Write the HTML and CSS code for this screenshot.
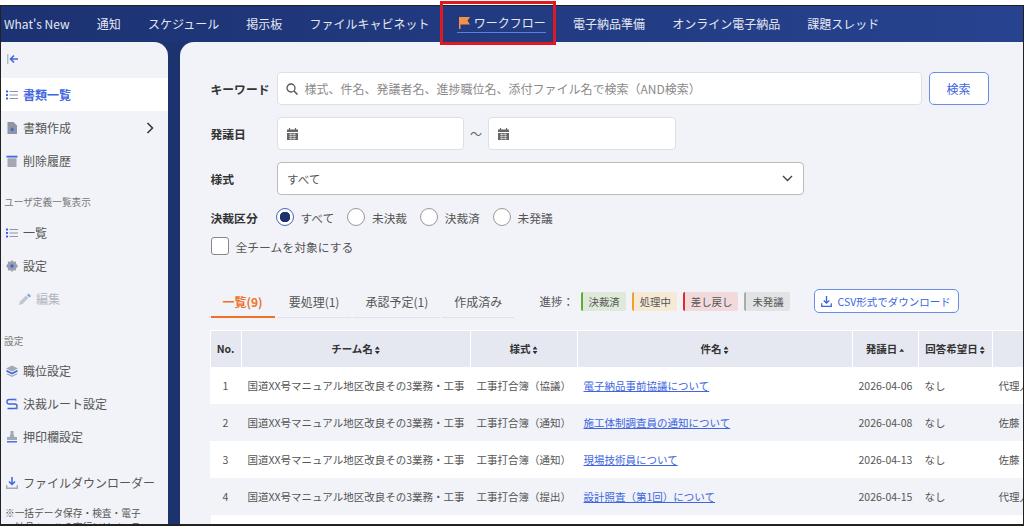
FILE: index.html
```html
<!DOCTYPE html>
<html lang="ja">
<head>
    <meta charset="utf-8">
    <title>ワークフロー</title>
    <link rel="stylesheet" href="styles.css">
</head>
<body>
    <div class="frame">
        <nav class="topnav">
            <a>What's New</a>
            <a>通知</a>
            <a>スケジュール</a>
            <a>掲示板</a>
            <a>ファイルキャビネット</a>
            <a class="current">
                <svg width="11" height="12" viewBox="0 0 11 12"><path d="M0 0h11L8.500 3.700 11 7.500H1.500V12H0z" fill="#f0924a"/></svg>
                ワークフロー
            </a>
            <a>電子納品準備</a>
            <a>オンライン電子納品</a>
            <a>課題スレッド</a>
        </nav>

        <div class="workspace">
            <aside class="sidebar">
                <div class="collapse">
                    <svg width="12" height="10" viewBox="0 0 12 10"><path d="M.8 0v10" stroke="#9aa0ad" fill="none"/><path d="M11 5H4M7 1.500 3.500 5 7 8.500" stroke="#3d66e0" stroke-width="1.600" fill="none"/></svg>
                </div>
                <a class="side-item active">
                    <svg class="side-icon" viewBox="0 0 12 12"><path d="M0 1.500h2v2H0zM0 5h2v2H0zM0 8.500h2v2H0z" fill="#3d66e0"/><path d="M3.500 2.500H12M3.500 6H12M3.500 9.500H12" stroke="#8f95a3" fill="none"/></svg>
                    書類一覧
                </a>
                <a class="side-item">
                    <svg class="side-icon" viewBox="0 0 12 12"><path d="M1.500 0h6L11 3.500V12H1.500z" fill="#8f95a3"/><path d="M4.500 7.500h3.500M6.200 5.800v3.500" stroke="#3d66e0" stroke-width="1.500"/></svg>
                    書類作成
                    <svg class="side-chevron" width="8" height="12" viewBox="0 0 8 12"><path d="M1.500 1 6.500 6l-5 5" stroke="#333" stroke-width="1.500" fill="none"/></svg>
                </a>
                <a class="side-item">
                    <svg class="side-icon" viewBox="0 0 12 12"><path d="M1.500 3.200h9V12h-9z" fill="#a3a8b3"/><path d="M.5.800h11v1.600H.5z" fill="#3d66e0"/></svg>
                    削除履歴
                </a>

                <div class="side-label user">ユーザ定義一覧表示</div>
                <a class="side-item">
                    <svg class="side-icon" viewBox="0 0 12 12"><path d="M0 1.500h2v2H0zM0 5h2v2H0zM0 8.500h2v2H0z" fill="#3d66e0"/><path d="M3.500 2.500H12M3.500 6H12M3.500 9.500H12" stroke="#8f95a3" fill="none"/></svg>
                    一覧
                </a>
                <a class="side-item">
                    <svg class="side-icon" viewBox="0 0 12 12"><path d="M6 0l1.500 1.700 2.300-.3.400 2.300L12 6l-1.800 2.300-.4 2.300-2.300-.3L6 12l-1.500-1.700-2.300.3-.4-2.300L0 6l1.800-2.300.4-2.300 2.300.3z" fill="#9a9fab"/><circle cx="6" cy="6" r="1.700" fill="#3d66e0"/></svg>
                    設定
                </a>
                <a class="side-item sub">
                    <svg class="side-icon" viewBox="0 0 12 12"><path d="M0 12l1-3.500 6-6L9.500 5l-6 6z" fill="#c3c6cf"/><path d="M8 2l1.500-1.500L12 3l-1.500 1.500z" fill="#7f9bea"/></svg>
                    編集
                </a>

                <div class="side-label settings">設定</div>
                <a class="side-item">
                    <svg class="side-icon" viewBox="0 0 12 12"><path d="M6 .5l6 3-6 3-6-3z" fill="#a3a8b3"/><path d="M.5 5.800 6 8.500l5.500-2.700" stroke="#3d66e0" stroke-width="1.600" fill="none"/><path d="M1 8.800 6 11.300l5-2.500" stroke="#a3a8b3" stroke-width="1.200" fill="none"/></svg>
                    職位設定
                </a>
                <a class="side-item">
                    <svg class="side-icon" viewBox="0 0 12 12"><path d="M10 1.500H3.200a2 2 0 0 0 0 4.500h5.600a2 2 0 0 1 0 4.500H1.500" stroke="#3d66e0" stroke-width="1.400" fill="none"/><path d="M10 .5v2.500M10.500 9.500l1.500 1-1.500 1" stroke="#8f95a3" fill="none"/></svg>
                    決裁ルート設定
                </a>
                <a class="side-item">
                    <svg class="side-icon" viewBox="0 0 12 12"><path d="M4.500 0h3v3.500L8.500 6H11v3H1V6h2.500l1-2.500z" fill="#a3a8b3"/><path d="M1 10.800h10" stroke="#3d66e0" stroke-width="1.400"/></svg>
                    押印欄設定
                </a>
                <a class="side-item download">
                    <svg class="side-icon" viewBox="0 0 12 12"><path d="M6 0v7M3 4.500 6 7.500l3-3" stroke="#3d66e0" stroke-width="1.500" fill="none"/><path d="M.7 8v3.300h10.600V8" stroke="#a3a8b3" stroke-width="1.400" fill="none"/></svg>
                    ファイルダウンローダー
                </a>
                <p class="side-note">※一括データ保存・検査・電子納品ツールの実行にはインストールが必要です</p>
            </aside>

            <main class="content">
                <div class="form-row">
                    <label class="form-label">キーワード</label>
                    <div class="field keyword">
                        <svg width="12" height="12" viewBox="0 0 12 12"><circle cx="5" cy="5" r="4" stroke="#555" stroke-width="1.300" fill="none"/><path d="M8 8l3.500 3.500" stroke="#555" stroke-width="1.500"/></svg>
                        <span class="placeholder">様式、件名、発議者名、進捗職位名、添付ファイル名で検索（AND検索）</span>
                    </div>
                    <button class="btn search-btn">検索</button>
                </div>
                <div class="form-row">
                    <label class="form-label">発議日</label>
                    <div class="field date">
                        <svg width="11" height="12" viewBox="0 0 11 12"><path d="M2.500 0v2M8.500 0v2" stroke="#666" stroke-width="1.200"/><path d="M0 1.500h11V4H0zM0 5h11v7H0z" fill="#666"/><path d="M2 6.500h7M2 8.500h7M2 10.500h7M3.800 5v7M7.200 5v7" stroke="#fff" stroke-width=".5"/></svg>
                    </div>
                    <span class="tilde">～</span>
                    <div class="field date">
                        <svg width="11" height="12" viewBox="0 0 11 12"><path d="M2.500 0v2M8.500 0v2" stroke="#666" stroke-width="1.200"/><path d="M0 1.500h11V4H0zM0 5h11v7H0z" fill="#666"/><path d="M2 6.500h7M2 8.500h7M2 10.500h7M3.800 5v7M7.200 5v7" stroke="#fff" stroke-width=".5"/></svg>
                    </div>
                </div>
                <div class="form-row">
                    <label class="form-label">様式</label>
                    <div class="field select">
                        すべて
                        <svg width="11" height="7" viewBox="0 0 11 7"><path d="M1 1l4.500 4.500L10 1" stroke="#444" stroke-width="1.400" fill="none"/></svg>
                    </div>
                </div>
                <div class="radio-row">
                    <label class="form-label">決裁区分</label>
                    <span class="radio on"></span><span class="radio-text">すべて</span>
                    <span class="radio"></span><span class="radio-text">未決裁</span>
                    <span class="radio"></span><span class="radio-text">決裁済</span>
                    <span class="radio"></span><span class="radio-text">未発議</span>
                </div>
                <div class="check-row">
                    <span class="checkbox"></span>全チームを対象にする
                </div>

                <div class="tab-row">
                    <div class="tabs">
                        <a class="tab active">一覧(9)</a>
                        <a class="tab">要処理(1)</a>
                        <a class="tab">承認予定(1)</a>
                        <a class="tab">作成済み</a>
                    </div>
                    <span class="legend-title">進捗：</span>
                    <span class="badge done">決裁済</span>
                    <span class="badge doing">処理中</span>
                    <span class="badge back">差し戻し</span>
                    <span class="badge none">未発議</span>
                    <button class="btn csv-btn">
                        <svg width="11" height="11" viewBox="0 0 12 12"><path d="M6 0v7.500M3 4.800 6 7.800l3-3" stroke="#3d66e0" stroke-width="1.500" fill="none"/><path d="M.8 8v3.200h10.400V8" stroke="#3d66e0" stroke-width="1.400" fill="none"/></svg>
                        CSV形式でダウンロード
                    </button>
                </div>

                <table class="doc-table">
                    <colgroup>
                        <col class="c-no"><col class="c-team"><col class="c-form"><col class="c-title"><col class="c-date"><col class="c-reply"><col class="c-rest">
                    </colgroup>
                    <thead>
                        <tr>
                            <th>No.</th>
                            <th>チーム名<i class="sort"></i></th>
                            <th>様式<i class="sort"></i></th>
                            <th>件名<i class="sort"></i></th>
                            <th>発議日<i class="sort-up"></i></th>
                            <th>回答希望日<i class="sort"></i></th>
                            <th></th>
                        </tr>
                    </thead>
                    <tbody>
                        <tr>
                            <td class="num">1</td>
                            <td>国道XX号マニュアル地区改良その3業務・工事</td>
                            <td>工事打合簿（協議）</td>
                            <td><a class="doc-link">電子納品事前協議について</a></td>
                            <td>2026-04-06</td>
                            <td>なし</td>
                            <td>代理人</td>
                        </tr>
                        <tr>
                            <td class="num">2</td>
                            <td>国道XX号マニュアル地区改良その3業務・工事</td>
                            <td>工事打合簿（通知）</td>
                            <td><a class="doc-link">施工体制調査員の通知について</a></td>
                            <td>2026-04-08</td>
                            <td>なし</td>
                            <td>佐藤</td>
                        </tr>
                        <tr>
                            <td class="num">3</td>
                            <td>国道XX号マニュアル地区改良その3業務・工事</td>
                            <td>工事打合簿（通知）</td>
                            <td><a class="doc-link">現場技術員について</a></td>
                            <td>2026-04-13</td>
                            <td>なし</td>
                            <td>佐藤</td>
                        </tr>
                        <tr>
                            <td class="num">4</td>
                            <td>国道XX号マニュアル地区改良その3業務・工事</td>
                            <td>工事打合簿（提出）</td>
                            <td><a class="doc-link">設計照査（第1回）について</a></td>
                            <td>2026-04-15</td>
                            <td>なし</td>
                            <td>代理人</td>
                        </tr>
                    </tbody>
                </table>
            </main>
        </div>
        <div class="callout"></div>
    </div>
</body>
</html>
```

FILE: styles.css
```css
* {
    box-sizing: border-box;
}
html, body {
    height: 100%;
    overflow: hidden;
}
body {
    margin: 0;
    background: white;
    font-family: "Noto Sans CJK JP", "Noto Sans", sans-serif;
    color: #555;
}
.frame {
    position: relative;
    margin-top: 5px;
    height: 521px;
    border: 1px solid #222;
    border-width: 1.500px 1.500px 2px 1.500px;
    background: #1d3370;
    display: flex;
    flex-direction: column;
}
.callout {
    position: absolute;
    left: 438.500px;
    top: -5.500px;
    width: 116px;
    height: 44px;
    border: 3px solid #dd1a22;
}

/* top navigation */
.topnav {
    flex: none;
    height: 36px;
    display: flex;
    align-items: center;
    gap: 27.200px;
    padding: 0 0 1px 3px;
    background: linear-gradient(90deg, #1c3272, #27438f);
    color: #e4e8f2;
    font-size: 12px;
    line-height: 17px;
}
.topnav a {
    white-space: nowrap;
}
.topnav .current {
    display: flex;
    align-items: center;
    gap: 3.500px;
    height: 19px;
    padding: 0 0 1px 2.500px;
    border-bottom: 1.500px solid #5b80e0;
}
.workspace {
    flex: 1;
    display: flex;
    gap: 11.500px;
    min-height: 0;
}

/* sidebar */
.sidebar {
    flex: none;
    width: 167px;
    background: #f1f3f8;
    border-top-right-radius: 14px;
    overflow: hidden;
    font-size: 12px;
}
.collapse {
    height: 36px;
    padding: 12px 0 0 6px;
    display: flex;
}
.side-item {
    position: relative;
    display: flex;
    align-items: center;
    gap: 5px;
    height: 33px;
    padding-left: 5px;
    color: #555;
    white-space: nowrap;
}
.side-item.active {
    background: white;
    color: #3d66e0;
    font-weight: 700;
}
.side-item.sub {
    padding-left: 18px;
    color: #b3b6bf;
}
.side-item.download {
    margin-top: 13px;
}
.side-icon {
    width: 12px;
    height: 12px;
    flex: none;
}
.side-chevron {
    position: absolute;
    left: 145px;
    top: 11px;
}
.side-label {
    margin-top: 13px;
    height: 24px;
    padding-left: 3px;
    font-size: 9.700px;
    line-height: 24px;
    color: #777;
}
.side-label.user {
    margin-bottom: 2px;
}
.side-label.settings {
    margin-top: 14px;
}
.side-label + .side-item {
    margin-top: 1px;
}
.side-note {
    margin: 8px 20px 0 4px;
    padding-left: 10px;
    text-indent: -10px;
    font-size: 9.700px;
    line-height: 13.500px;
    color: #555;
}

/* search form */
.content {
    flex: 1;
    min-width: 0;
    overflow: hidden;
    background: #f1f3f8;
    border-top-left-radius: 14px;
    padding: 30px 0 0 31px;
    font-size: 11px;
}
.form-row {
    display: flex;
    align-items: center;
    height: 33px;
    margin-bottom: 12px;
}
.form-label {
    flex: none;
    width: 66px;
    font-size: 11.800px;
    font-weight: 700;
    color: #333;
    white-space: nowrap;
}
.field {
    display: flex;
    align-items: center;
    height: 33px;
    background: white;
    border: 1px solid #dcdfe6;
    border-radius: 4px;
    padding: 0 10px;
    color: #555;
}
.field.keyword {
    width: 645px;
    gap: 7px;
    padding-left: 8px;
}
.placeholder {
    font-size: 12px;
    color: #8a8a8a;
    white-space: nowrap;
}
.field.date {
    width: 187.500px;
    padding-left: 9px;
}
.tilde {
    width: 24px;
    text-align: center;
    font-size: 12px;
    color: #666;
}
.field.select {
    width: 527px;
    justify-content: space-between;
    border-color: #bbb;
    padding-left: 9.500px;
    font-size: 11.500px;
}
.btn {
    background: white;
    border: 1px solid #6a8ee8;
    border-radius: 5px;
    color: #3d66e0;
    font-family: inherit;
    padding: 0;
}
.search-btn {
    width: 60px;
    height: 33px;
    margin-left: 7px;
    font-size: 12px;
}
.radio-row {
    display: flex;
    align-items: center;
    height: 20px;
    font-size: 11.700px;
}
.radio-row .form-label {
    width: 65px;
}
.radio {
    flex: none;
    width: 18px;
    height: 18px;
    border: 1px solid #999;
    border-radius: 50%;
    background: white;
}
.radio.on {
    border-color: #4a68b8;
    background: radial-gradient(circle, #1d3370 0 5px, white 5.500px);
}
.radio-text {
    margin: 0 12.700px 0 7px;
    white-space: nowrap;
}
.check-row {
    display: flex;
    align-items: center;
    gap: 7px;
    margin-top: 10px;
    height: 18px;
    font-size: 11.800px;
}
.checkbox {
    width: 18px;
    height: 18px;
    background: white;
    border: 1px solid #888;
    border-radius: 3px;
}

/* tabs and legend */
.tab-row {
    display: flex;
    align-items: center;
    margin-top: 34px;
    height: 24px;
}
.tabs {
    display: flex;
    gap: 2px;
    width: 329px;
    flex: none;
    align-self: flex-start;
}
.tab {
    height: 29px;
    padding: 0 12px;
    border-bottom: 1.500px solid #e0e2e8;
    font-size: 12px;
    line-height: 25px;
    white-space: nowrap;
}
.tab.active {
    color: #f0702a;
    font-weight: 700;
    border-bottom: 2px solid #f0702a;
}
.legend-title {
    flex: none;
    width: 41px;
    font-size: 11.500px;
}
.badge {
    flex: none;
    height: 19px;
    margin-right: 6px;
    padding: 0 6px;
    border-left: 2px solid;
    border-radius: 2px;
    font-size: 10.400px;
    line-height: 19px;
    white-space: nowrap;
}
.badge.done {
    background: #dfe9da;
    border-left-color: #5ab030;
}
.badge.doing {
    background: #f6ead6;
    border-left-color: #f0a030;
}
.badge.back {
    background: #f2d9dc;
    border-left-color: #dd2a30;
}
.badge.none {
    background: #e2e3e5;
    border-left-color: #aaa;
}
.csv-btn {
    flex: none;
    display: flex;
    align-items: center;
    justify-content: center;
    gap: 5px;
    width: 145px;
    height: 24px;
    margin-left: 18px;
    font-size: 10.500px;
}

/* table */
.doc-table {
    margin: 17px 0 0 -1px;
    width: 900px;
    table-layout: fixed;
    border-collapse: collapse;
    font-size: 10.500px;
}
.c-no { width: 31px; }
.c-team { width: 229px; }
.c-form { width: 107px; }
.c-title { width: 275px; }
.c-date { width: 66px; }
.c-reply { width: 74px; }
.doc-table th {
    height: 36px;
    padding: 0;
    background: #e5e8f1;
    border: 1px solid white;
    border-bottom: none;
    color: #333;
    font-weight: 700;
    white-space: nowrap;
}
.sort, .sort-up {
    display: inline-block;
    margin-left: 2px;
    width: 5px;
    height: 8px;
    vertical-align: -1px;
    background: #333;
}
.sort {
    clip-path: polygon(50% 0, 100% 40%, 0 40%, 0 60%, 100% 60%, 50% 100%, 0 60%, 0 40%);
}
.sort-up {
    clip-path: polygon(50% 30%, 100% 70%, 0 70%);
}
.doc-table td {
    height: 37px;
    padding: 0 0 0 6.500px;
    white-space: nowrap;
    overflow: hidden;
    color: #555;
}
.doc-table td.num {
    padding: 0;
    text-align: center;
}
.doc-table tbody tr:nth-child(odd) {
    background: white;
}
.doc-table tbody tr:nth-child(even) {
    background: #f1f3f8;
}
.doc-link {
    color: #3d66e0;
    text-decoration: underline;
}
.content::after {
    content: "";
    display: block;
    height: 40px;
    width: 900px;
    background: white;
}
```
